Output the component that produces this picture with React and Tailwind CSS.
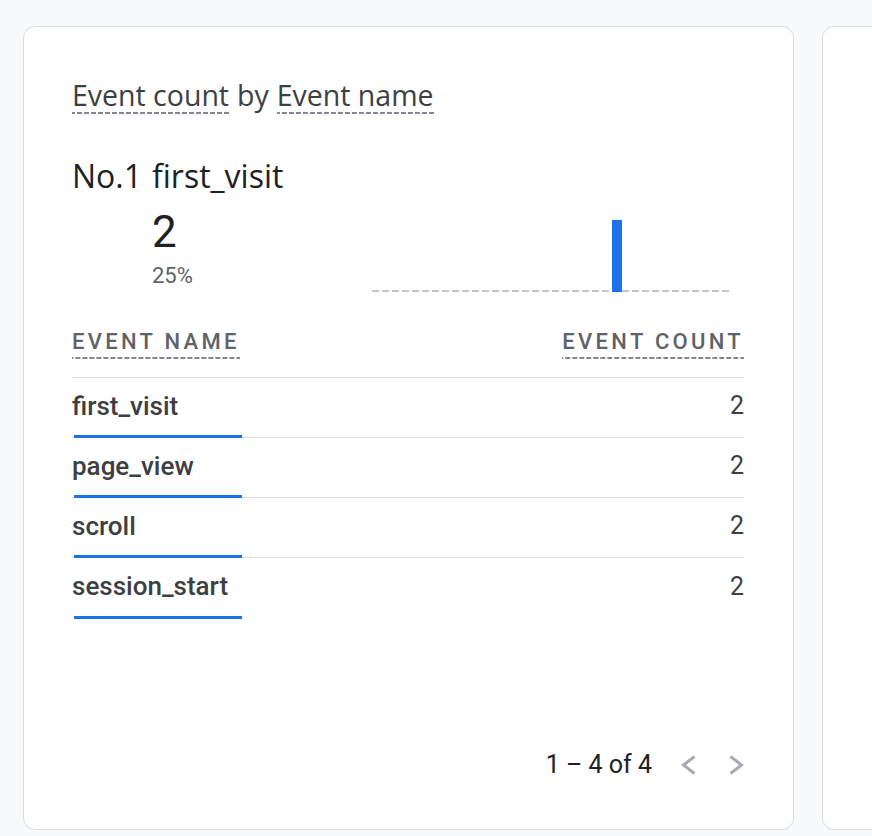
import React from "react";

const rows = [
  { name: "first_visit", count: 2 },
  { name: "page_view", count: 2 },
  { name: "scroll", count: 2 },
  { name: "session_start", count: 2 },
];

// dashed underline used by the card title and table headers
const dashed =
  "bg-[linear-gradient(to_right,#80868b_65%,transparent_0)] bg-[length:7px_2px] bg-repeat-x bg-bottom pb-[3px]";

const ChevronLeft = () => (
  <svg width="16" height="24" viewBox="0 0 16 24" fill="none">
    <path d="M14.5 3.5L3.5 12l11 8.5" stroke="#a8abaf" strokeWidth="3" />
  </svg>
);

const ChevronRight = () => (
  <svg width="16" height="24" viewBox="0 0 16 24" fill="none">
    <path d="M1.5 3.5l11 8.5-11 8.5" stroke="#a8abaf" strokeWidth="3" />
  </svg>
);

const MiniChart = () => (
  <div className="relative w-[358px] h-[74px]">
    <div className="absolute left-0 right-0 bottom-0 h-[2px] bg-[linear-gradient(to_right,#c4c7ca_70%,transparent_0)] bg-[length:10px_2px] bg-repeat-x" />
    <div className="absolute left-[240px] bottom-0 w-[10px] h-[72px] bg-[#1a73e8]" />
  </div>
);

const EventCard = () => (
  <div className="w-[771px] h-[804px] shrink-0 rounded-[12px] border border-[#dadce0] bg-white pl-[48px] pr-[49px] pt-[52px] flex flex-col">
    <div className="text-[28.5px] leading-[32px] text-[#3c4043] font-['Open_Sans',sans-serif] flex gap-[8px]">
      <span className={dashed}>Event count</span>
      <span>by</span>
      <span className={dashed}>Event name</span>
    </div>

    <div className="mt-[44px] flex justify-between">
      <div className="text-[#202124]">
        <div className="text-[32px] leading-[36px] font-['Open_Sans',sans-serif] flex">
          <span className="w-[80px]">No.1</span>
          <span>first_visit</span>
        </div>
        <div className="pl-[80px] font-['Roboto',sans-serif]">
          <div className="mt-[14px] text-[44px] leading-[48px]">2</div>
          <div className="mt-[7px] text-[22px] leading-[26px] text-[#5f6368]">25%</div>
        </div>
      </div>
      <div className="pt-[60px] pr-[14px]">
        <MiniChart />
      </div>
    </div>

    <div className="mt-[36px] font-['Roboto',sans-serif]">
      <div className="flex justify-between items-end border-b border-[#dadce0] pb-[18px] text-[22px] leading-[28px] font-medium tracking-[0.15em] text-[#5f6368]">
        <span className={dashed + " mr-[-3px]"}>EVENT NAME</span>
        <span className={dashed}>EVENT COUNT</span>
      </div>
      {rows.map((r, i) => (
        <div
          key={r.name}
          className={
            "relative h-[60px] flex items-center justify-between text-[26px] font-medium text-[#3c4043] " +
            (i < rows.length - 1 ? "border-b border-[#dadce0]" : "")
          }
        >
          <span className="-mt-[3px]">{r.name}</span>
          <span className="-mt-[3px] font-normal text-[25px]">{r.count}</span>
          <div className="absolute left-[2px] bottom-[-1px] w-[168px] h-[3px] bg-[#1a73e8]" />
        </div>
      ))}
    </div>

    <div className="mt-auto mb-[48px] flex items-center justify-end font-['Roboto',sans-serif] text-[25px] leading-[32px] text-[#202124]">
      <span>1 – 4 of 4</span>
      <div className="ml-[28px] flex gap-[33px] -mr-[1px]">
        <ChevronLeft />
        <ChevronRight />
      </div>
    </div>
  </div>
);

export default function App() {
  return (
    <div className="min-h-[836px] w-[872px] overflow-hidden bg-[#f8f9fa] flex gap-[28px] pl-[23px] pt-[26px]">
      <EventCard />
      <div className="w-[400px] h-[804px] shrink-0 rounded-[12px] border border-[#dadce0] bg-white" />
    </div>
  );
}
